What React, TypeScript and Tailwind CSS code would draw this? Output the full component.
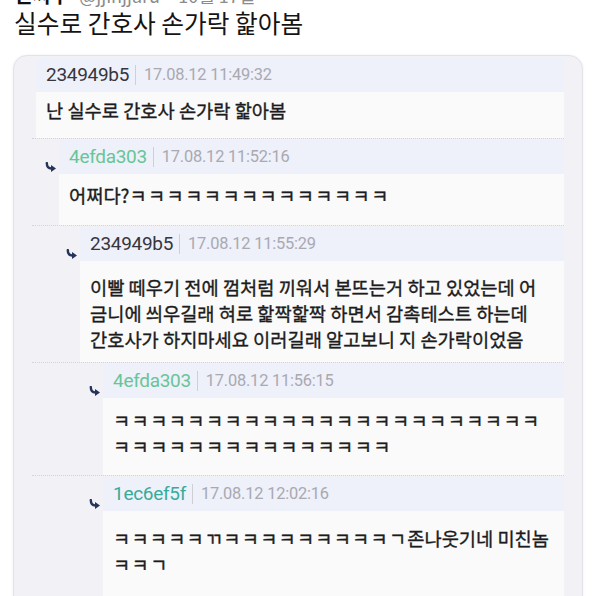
import React from 'react';

type Comment = {
  level: number;
  name: string;
  nameColor: string;
  time: string;
  lines: React.ReactNode[];
  bodyPad: string;
};

const k = (n: number) => 'ㅋ'.repeat(n);

const comments: Comment[] = [
  {
    level: 0,
    name: '234949b5',
    nameColor: 'text-[#36363c]',
    time: '17.08.12 11:49:32',
    lines: ['난 실수로 간호사 손가락 핥아봄'],
    bodyPad: 'pt-[5px] pb-[15px]',
  },
  {
    level: 1,
    name: '4efda303',
    nameColor: 'text-[#68c597]',
    time: '17.08.12 11:52:16',
    lines: [
      <>
        어쩌다?<span className="tracking-[1.4px]">{k(14)}</span>
      </>,
    ],
    bodyPad: 'pt-[8px] pb-[17px]',
  },
  {
    level: 2,
    name: '234949b5',
    nameColor: 'text-[#36363c]',
    time: '17.08.12 11:55:29',
    lines: [
      '이빨 떼우기 전에 껌처럼 끼워서 본뜨는거 하고 있었는데 어',
      '금니에 씌우길래 혀로 핥짝핥짝 하면서 감촉테스트 하는데',
      '간호사가 하지마세요 이러길래 알고보니 지 손가락이었음',
    ],
    bodyPad: 'pt-[13px] pb-[10px]',
  },
  {
    level: 3,
    name: '4efda303',
    nameColor: 'text-[#68c597]',
    time: '17.08.12 11:56:15',
    lines: [
      <span className="tracking-[1.4px]">{k(23)}</span>,
      <span className="tracking-[1.4px]">{k(15)}</span>,
    ],
    bodyPad: 'pt-[9px] pb-[16px]',
  },
  {
    level: 3,
    name: '1ec6ef5f',
    nameColor: 'text-[#37ab9a]',
    time: '17.08.12 12:02:16',
    lines: [
      <>
        <span className="tracking-[1.2px]">{k(5) + 'ㄲ' + k(9) + 'ㄱ'}</span>존나웃기네 미친놈
      </>,
      <span className="tracking-[1.4px]">ㅋㅋㄱ</span>,
    ],
    bodyPad: 'pt-[14px] pb-[20px]',
  },
];

const indent = ['w-[4px]', 'w-[27px]', 'w-[48px]', 'w-[71px]'];

function ReplyArrow() {
  return (
    <svg width="12" height="11" viewBox="0 0 12 11" className="shrink-0">
      <path d="M1.8 1 Q1.8 6.5 6.5 6.5" fill="none" stroke="#25345a" strokeWidth="2.4" strokeLinecap="round" />
      <path d="M6 3 L11 6.5 L6 10 Z" fill="#25345a" />
    </svg>
  );
}

function CommentRow({ c }: { c: Comment }) {
  return (
    <div className="border-b border-dotted border-[#d3d3dc] mb-[1px]">
      <div className="flex h-[34px]">
        <div className={`${indent[c.level]} shrink-0 flex items-end justify-end pr-[2px] pb-[1px]`}>
          {c.level > 0 && <ReplyArrow />}
        </div>
        <div className="flex-1 bg-[#eef0fa] flex items-center px-[10px] font-['Roboto',sans-serif]">
          <span className={`text-[19px] tracking-[-0.3px] ${c.nameColor}`}>{c.name}</span>
          <span className="ml-[6px] mr-[8px] h-[20px] w-px bg-[#cfd0d6]" />
          <span className="text-[16.4px] text-[#a9a9b0] tracking-[-0.2px]">{c.time}</span>
        </div>
      </div>
      <div className="flex">
        <div className={`${indent[c.level]} shrink-0`} />
        <div
          className={`flex-1 bg-[#fafafa] px-[10px] ${c.bodyPad} text-[18.7px] leading-[26px] text-[#1c1c20] [-webkit-text-stroke:0.35px_#1c1c20] font-['Noto_Sans_CJK_KR',sans-serif]`}
        >
          {c.lines.map((l, i) => (
            <div key={i} className="whitespace-nowrap">
              {l}
            </div>
          ))}
        </div>
      </div>
    </div>
  );
}

export default function App() {
  return (
    <div className="w-[600px] h-[596px] overflow-hidden bg-white font-['Noto_Sans_CJK_KR','Noto_Sans',sans-serif]">
      <div className="h-[7px] overflow-hidden relative">
        <div className="flex items-baseline gap-[10px] px-[14px] -mt-[17px] leading-[24px]">
          <span className="text-[20px] font-bold text-[#111]">진짜루</span>
          <span className="text-[18px] text-[#8b8b8b]">@jjinjjaru · 10월 17일</span>
        </div>
      </div>
      <h1 className="px-[14px] text-[24.7px] leading-[30px] text-[#141414]">실수로 간호사 손가락 핥아봄</h1>
      <div className="mt-[18px] ml-[13px] w-[570px] h-[600px] rounded-[14px] border border-[#e2e2ea] bg-[#f2f2f6] px-[18px] pt-[2px] shadow-[0_0_3px_rgba(0,0,0,0.06)]">
        {comments.map((c, i) => (
          <CommentRow key={i} c={c} />
        ))}
      </div>
    </div>
  );
}
